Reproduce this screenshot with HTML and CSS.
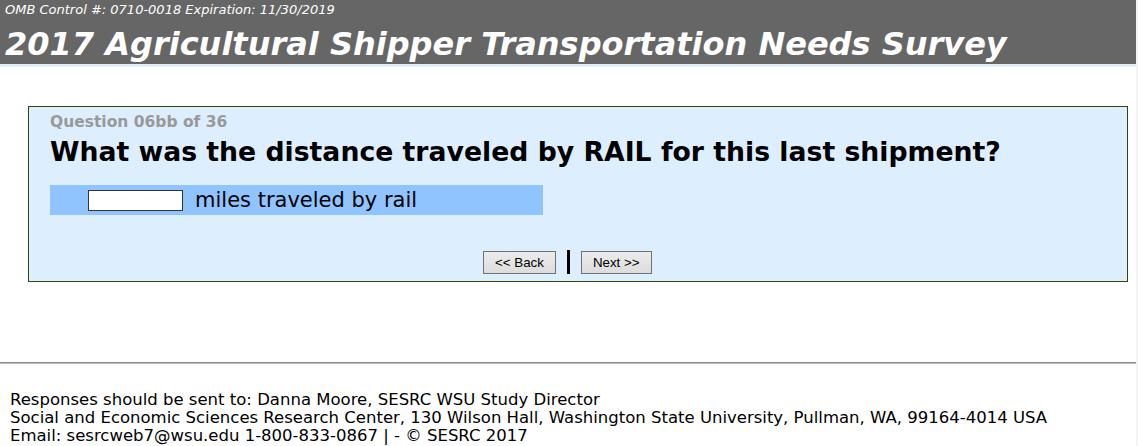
FILE: index.html
```html
<!DOCTYPE html>
<html lang="en">
<head>
<meta charset="utf-8">
<title>2017 Agricultural Shipper Transportation Needs Survey</title>
<link rel="stylesheet" href="styles.css">
</head>
<body>
<div class="page">
  <header class="banner">
    <div class="omb">OMB Control #: 0710-0018 Expiration: 11/30/2019</div>
    <h1 class="title">2017 Agricultural Shipper Transportation Needs Survey</h1>
  </header>
  <main class="content">
    <section class="qbox">
      <div class="qnum">Question 06bb of 36</div>
      <h2 class="qtext">What was the distance traveled by RAIL for this last shipment?</h2>
      <div class="answer">
        <input class="answer-input" type="text" aria-label="miles traveled by rail">
        <span class="answer-label">miles traveled by rail</span>
      </div>
      <div class="nav">
        <button class="btn" type="button">&lt;&lt; Back</button>
        <span class="divider"></span>
        <button class="btn" type="button">Next &gt;&gt;</button>
      </div>
    </section>
  </main>
  <footer class="footer">
    <div class="rule"></div>
    <div class="foot-text">
      <div>Responses should be sent to: Danna Moore, SESRC WSU Study Director</div>
      <div>Social and Economic Sciences Research Center, 130 Wilson Hall, Washington State University, Pullman, WA, 99164-4014 USA</div>
      <div>Email: sesrcweb7@wsu.edu 1-800-833-0867 | - © SESRC 2017</div>
    </div>
  </footer>
</div>
</body>
</html>
```
FILE: styles.css
```css
html {
  background: #f4f4f4;
}
body {
  margin: 0;
  font-family: "DejaVu Sans", Verdana, sans-serif;
  color: #000;
}
.page {
  width: 1136px;
  min-height: 446px;
  background: #fff;
  display: flex;
  flex-direction: column;
}
.banner {
  background: #666666;
  border-bottom: 3px solid #ddeeff;
  height: 64px;
  padding: 0 0 0 5px;
  color: #fff;
  display: flex;
  flex-direction: column;
  overflow: hidden;
}
.omb {
  font-style: italic;
  font-size: 13px;
  line-height: 16px;
  padding-top: 2px;
}
.title {
  margin: 6px 0 0;
  font-size: 32px;
  font-weight: bold;
  font-style: italic;
  line-height: 40px;
  white-space: nowrap;
}
.content {
  padding: 39px 0 0 28px;
}
.qbox {
  width: 1077px;
  height: 174px;
  border: 1px solid #2f4a00;
  background: #ddeeff;
  padding: 0 0 0 21px;
  box-sizing: content-box;
  display: flex;
  flex-direction: column;
}
.qnum {
  font-family: "DejaVu Sans", Tahoma, sans-serif;
  font-weight: bold;
  font-size: 15.5px;
  color: #999;
  line-height: 18px;
  margin-top: 6px;
}
.qtext {
  margin: 5px 0 0;
  font-size: 26.7px;
  font-weight: bold;
  line-height: 32px;
  white-space: nowrap;
}
.answer {
  margin-top: 17px;
  width: 493px;
  height: 30px;
  background: #8fc4ff;
  display: flex;
  align-items: center;
  padding-left: 38px;
  box-sizing: border-box;
}
.answer-input {
  width: 95px;
  height: 21px;
  box-sizing: border-box;
  border: 1px solid #333;
  background: #fff;
  margin: 0;
  padding: 0;
}
.answer-label {
  margin-left: 12px;
  font-size: 21px;
  line-height: 24px;
}
.nav {
  margin-top: 35px;
  margin-left: 433px;
  display: flex;
  align-items: center;
  gap: 11px;
}
.btn {
  font-family: "Liberation Sans", Arial, sans-serif;
  font-size: 13.333px;
  color: #000;
  height: 23px;
  padding: 0 11px;
  border: 1px solid #707070;
  background: linear-gradient(#ececec, #dcdcdc);
  border-radius: 0;
  margin: 0;
}
.divider {
  width: 3px;
  height: 24px;
  background: #000;
}
.footer {
  margin-top: 80px;
}
.rule {
  height: 1px;
  border-top: 1px solid #8a8a8a;
  background: #bdbdbd;
}
.foot-text {
  padding: 27px 0 0 10px;
  font-size: 16.5px;
  line-height: 18px;
}
```
